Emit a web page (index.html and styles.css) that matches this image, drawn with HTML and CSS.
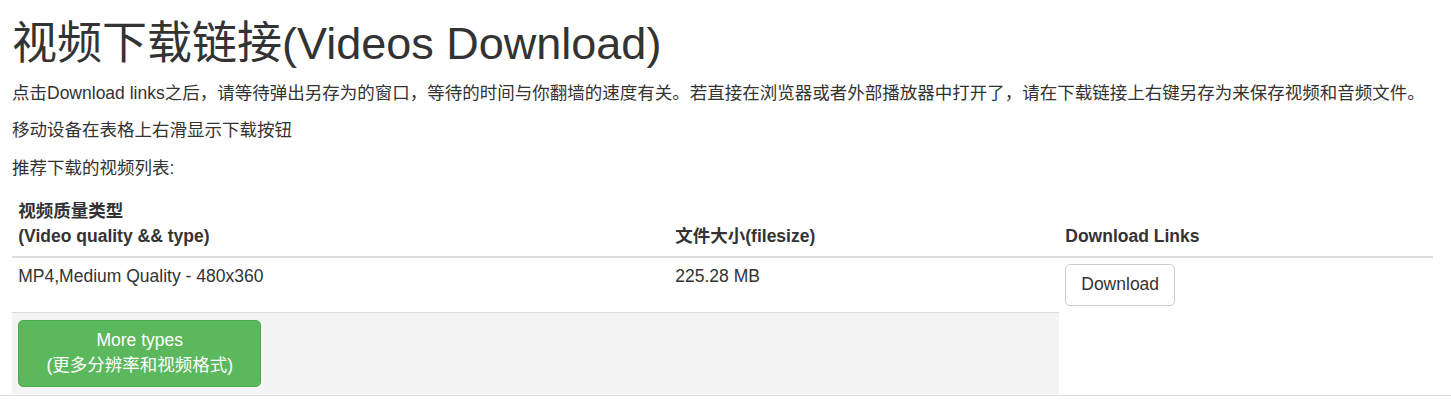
FILE: index.html
```html
<!DOCTYPE html>
<html lang="zh-CN">
<head>
<meta charset="utf-8">
<title>视频下载链接(Videos Download)</title>
<link rel="stylesheet" href="styles.css">
</head>
<body>
<div class="page">
  <h1 class="title">视频下载链接(Videos Download)</h1>
  <p class="note">点击Download links之后，请等待弹出另存为的窗口，等待的时间与你翻墙的速度有关。若直接在浏览器或者外部播放器中打开了，请在下载链接上右键另存为来保存视频和音频文件。</p>
  <p class="note">移动设备在表格上右滑显示下载按钮</p>
  <p class="note">推荐下载的视频列表:</p>
  <table class="dl-table">
    <colgroup>
      <col class="c1">
      <col class="c2">
      <col class="c3">
    </colgroup>
    <thead>
      <tr>
        <th>视频质量类型<br>(Video quality &amp;&amp; type)</th>
        <th>文件大小(filesize)</th>
        <th>Download Links</th>
      </tr>
    </thead>
    <tbody>
      <tr>
        <td>MP4,Medium Quality - 480x360</td>
        <td>225.28 MB</td>
        <td><a class="btn btn-default" href="#">Download</a></td>
      </tr>
      <tr>
        <td class="more-cell" colspan="2"><a class="btn btn-success" href="#">More types<br>(更多分辨率和视频格式)</a></td>
      </tr>
    </tbody>
  </table>
</div>
<div class="rule"></div>
</body>
</html>
```
FILE: styles.css
```css
html, body {
  margin: 0;
  padding: 0;
  background: #fff;
}
body {
  font-family: "Liberation Sans", "Noto Sans CJK SC", sans-serif;
  font-size: 17.5px;
  line-height: 25px;
  color: #333;
}
.page {
  padding: 19px 18px 0 12px;
}
.title {
  margin: 0 0 12px 0;
  font-size: 45px;
  line-height: 49.5px;
  font-weight: normal;
  color: #333;
}
.note {
  margin: 0 0 12.5px 0;
}
.dl-table {
  width: 1421px;
  border-collapse: collapse;
  border-spacing: 0;
  margin: 0;
}
.c1 { width: 657px; }
.c2 { width: 390px; }
.c3 { width: 374px; }
.dl-table th,
.dl-table td {
  padding: 6.25px;
  text-align: left;
  vertical-align: top;
}
.dl-table th {
  vertical-align: bottom;
  font-weight: bold;
  border-bottom: 2px solid #ddd;
}
.dl-table td.btn-cell {
  padding-top: 7px;
}
.dl-table tbody tr + tr td {
  border-top: 1px solid #ddd;
}
.dl-table td.more-cell {
  background: #f4f4f4;
  padding-top: 7px;
  padding-bottom: 7px;
}
.btn {
  display: inline-block;
  box-sizing: border-box;
  padding: 7.5px 15px;
  border: 1.25px solid transparent;
  border-radius: 5px;
  font-size: 17.5px;
  line-height: 25px;
  text-align: center;
  text-decoration: none;
  vertical-align: middle;
}
.btn-default {
  color: #333;
  background: #fff;
  border-color: #ccc;
}
.btn-success {
  width: 243px;
  color: #fff;
  background: #5cb85c;
  border-color: #4cae4c;
}
.rule {
  margin-top: 1px;
  border-top: 1px solid #ddd;
}
```
